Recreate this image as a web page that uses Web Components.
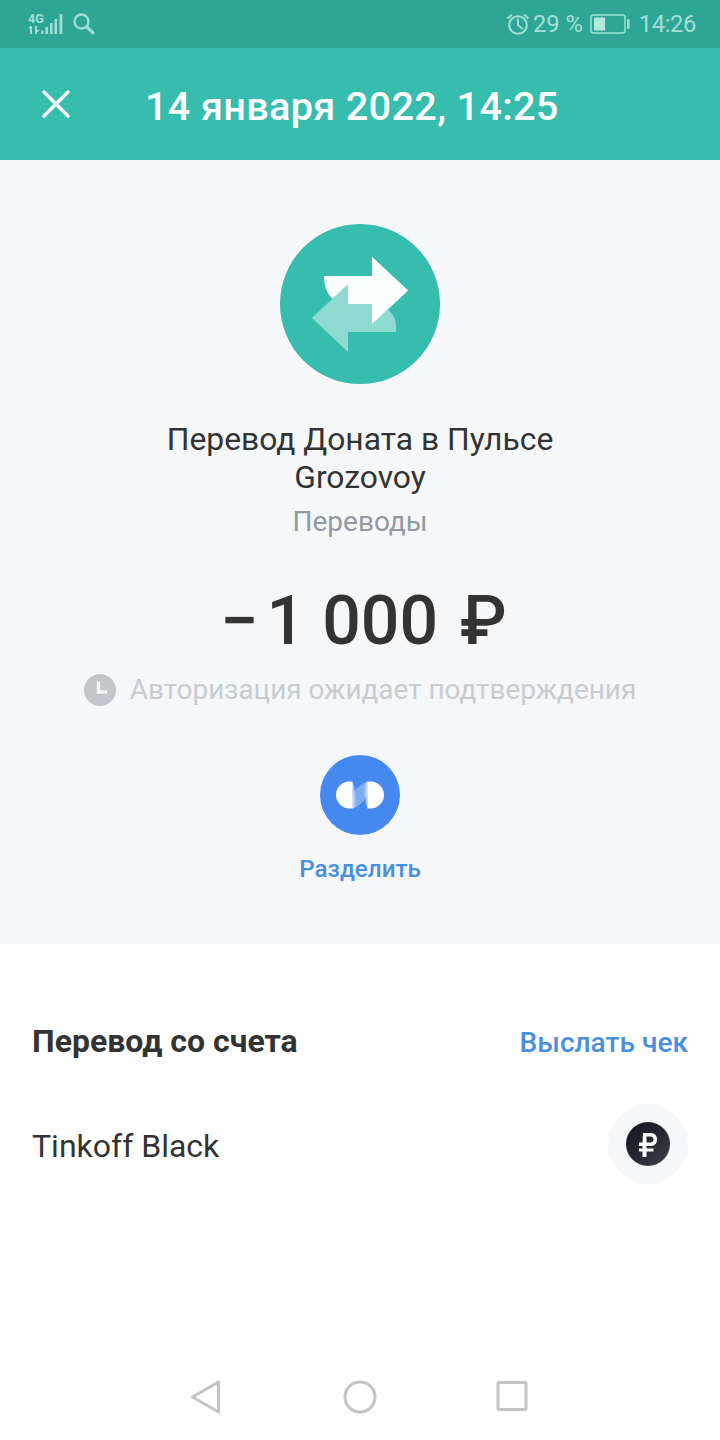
<!DOCTYPE html>
<html><head><meta charset="utf-8">
<style>
html,body{margin:0;padding:0;background:#fff}
body{width:720px;height:1440px;overflow:hidden;font-family:Roboto,"Liberation Sans",sans-serif}
</style></head>
<body>
<status-bar></status-bar>
<app-bar>14 января 2022, 14:25</app-bar>
<op-summary></op-summary>
<account-section></account-section>
<nav-bar></nav-bar>
<script>
function def(name, html){
  customElements.define(name, class extends HTMLElement{
    constructor(){super();this.attachShadow({mode:'open'}).innerHTML=html;}
  });
}
def('status-bar',`<style>
:host{display:flex;height:48px;background:#2fa596;align-items:center;box-sizing:border-box;padding:0 24px 0 28px;color:#9fe0d6;font-size:23.800px;line-height:48px}
.l{display:flex;align-items:center;gap:7px}
.r{margin-left:auto;display:flex;align-items:center}
svg{display:block}
.pct{margin-left:3px;letter-spacing:-.1px}
.time{margin-left:9px;letter-spacing:-.4px}
.bat{margin-left:7px}
</style>
<div class="l">
<svg width="36" height="24" viewBox="0 0 36 24"><g fill="#9fe0d6">
<text x="0" y="10.500" font-family="Roboto" font-size="12.500" font-weight="700">4G</text>
<rect x="2" y="14" width="2" height="8"/><path d="M.2 16.500l2-2.500v2.500z"/><rect x="7" y="14" width="2" height="8"/><path d="M8.500 19l2.800-1.800v1.600l-2.800 1.800z"/>
<rect x="13" y="18.500" width="2.500" height="3.500" rx="1"/><rect x="17.500" y="15" width="2.500" height="7"/><rect x="22" y="11" width="2.500" height="11"/><rect x="26.500" y="7" width="2.500" height="15"/><rect x="31.500" y="2" width="2.800" height="20"/></g></svg>
<svg style="margin-left:1px" width="24" height="24" viewBox="0 0 24 24" fill="none" stroke="#9fe0d6"><circle cx="9.500" cy="9.500" r="7" stroke-width="2.300"/><path d="M14.800 14.800l6.200 6" stroke-width="3.200" stroke-linecap="round"/></svg>
</div>
<div class="r">
<svg width="24" height="24" viewBox="0 0 24 24" fill="none" stroke="#9fe0d6" stroke-width="2"><circle cx="12" cy="13" r="8.800"/><path d="M12 7.500V13l4 3.500" stroke-linecap="round"/><path d="M1.500 6.500L6 2.500M22.500 6.500L18 2.500" stroke-width="2.200"/></svg>
<span class="pct">29 %</span>
<svg class="bat" width="40" height="22" viewBox="0 0 40 22" fill="none"><rect x="1" y="2" width="34" height="18" rx="3" stroke="#9fe0d6" stroke-width="1.500"/><rect x="4" y="4.500" width="11" height="13" rx="1" fill="#b4e8df"/><rect x="37" y="6" width="2.500" height="10" rx="1" fill="#9fe0d6"/></svg>
<span class="time">14:26</span>
</div>`);
def('app-bar',`<style>
:host{display:flex;height:112px;background:#36bdae;align-items:center;box-sizing:border-box;padding:0 0 0 40px;color:#fff;font-size:39.700px;font-weight:500}
svg{display:block;flex:none}
.t{margin-left:73px;margin-top:4px;letter-spacing:.3px}
</style>
<svg width="32" height="32" viewBox="0 0 32 32" fill="none" stroke="#fff" stroke-width="3.400" stroke-linecap="round"><path d="M4 4l24 24M28 4L4 28"/></svg>
<span class="t"><slot></slot></span>`);
def('op-summary',`<style>
:host{display:flex;flex-direction:column;align-items:center;height:784px;box-sizing:border-box;background:#f5f7f9;padding-top:64px;color:#333}
svg{display:block}
.big{width:160px;height:160px;flex:none}
.name{margin-top:36px;font-size:31.800px;line-height:38px;text-align:center;color:#333}
.cat{margin-top:8px;font-size:28px;line-height:36px;color:#9299a2}
.amt{margin:39px 0 0 7px;font-size:68px;line-height:84px;font-weight:500;color:#333;display:flex;align-items:center}
.amt .m{margin-right:8px}
.amt .p{margin-left:5px}
.status{margin-top:9px;display:flex;align-items:center;gap:14px;color:#c9ccd0;font-size:27.900px;line-height:36px}
.split{margin-top:47px;width:80px;height:80px}
.lbl{margin-top:17px;color:#4a8fdd;font-size:24.200px;line-height:34px;font-weight:500}
</style>
<svg class="big" viewBox="0 0 160 160">
<circle cx="80" cy="80" r="80" fill="#36bdae"/>
<path d="M44 52H92V33L128 66.500L92 100V80H68C52 80 44 68 44 52Z" fill="#fbffff"/>
<path d="M116 108H68V128L32 94L68 60V80H92C106 80 116 90 116 102Z" fill="#8edad1"/>
<path d="M92 33L128 66.500L92 100Z" fill="#fbffff"/>
</svg>
<div class="name">Перевод Доната в Пульсе<br>Grozovoy</div>
<div class="cat">Переводы</div>
<div class="amt"><span class="m">−</span><span>1 000</span><span class="p">&nbsp;₽</span></div>
<div class="status">
<svg width="32" height="32" viewBox="0 0 32 32"><circle cx="16" cy="16" r="16" fill="#c3c7cb"/><path d="M14.500 7.500V18H23" fill="none" stroke="#f5f7f9" stroke-width="3.400"/></svg>
<span>Авторизация ожидает подтверждения</span></div>
<svg class="split" viewBox="0 0 80 80">
<defs>
<linearGradient id="a" x1="0" y1="0" x2="1" y2="0"><stop offset="0" stop-color="#fff" stop-opacity=".8"/><stop offset=".55" stop-color="#fff" stop-opacity=".15"/><stop offset="1" stop-color="#fff" stop-opacity=".05"/></linearGradient>
<linearGradient id="b" x1="1" y1="0" x2="0" y2="0"><stop offset="0" stop-color="#fff" stop-opacity=".8"/><stop offset=".55" stop-color="#fff" stop-opacity=".15"/><stop offset="1" stop-color="#fff" stop-opacity=".05"/></linearGradient>
</defs>
<circle cx="40" cy="40" r="40" fill="#4488f0"/>
<path d="M32.500 26.500H29.500A13.500 13.500 0 0 0 29.500 53.500H32.500Z" fill="#fff"/>
<path d="M47.500 26.500H50.500A13.500 13.500 0 0 1 50.500 53.500H47.500Z" fill="#fff"/>
<path d="M47.500 26.500V36C47 44 43 47 40 49.500C37 52 35 53 32.500 53.500V44C33 36 37 33 40 30.500C43 28 45 27 47.500 26.500Z" fill="#fff" fill-opacity=".3"/>
<path d="M32.500 26.500V53.500C35 52 36 50 37.500 47.500C36 41 35 33 32.500 26.500Z" fill="url(#a)"/>
<path d="M47.500 26.500V53.500C45 47 44 39 42.500 32.500C44 30 45 28 47.500 26.500Z" fill="url(#b)"/>
</svg>
<div class="lbl">Разделить</div>`);
def('account-section',`<style>
:host{display:block;box-sizing:border-box;padding:76px 32px 0;background:#fff;color:#333}
.h{display:flex;justify-content:space-between;align-items:center;height:44px}
.t{font-size:32px;font-weight:700;color:#333;margin-top:-2px}
.a{font-size:28.100px;font-weight:500;color:#4a8fdd}
.row{display:flex;justify-content:space-between;align-items:center;margin-top:40px;height:80px;font-size:32px}
.row span{margin-top:4px}
.ic{width:80px;height:80px;border-radius:50%;background:#f5f7f9;display:flex;align-items:center;justify-content:center}
svg{display:block}
</style>
<div class="h"><span class="t">Перевод со счета</span><span class="a">Выслать чек</span></div>
<div class="row"><span>Tinkoff Black</span>
<div class="ic"><svg width="44" height="44" viewBox="0 0 44 44"><defs><linearGradient id="g" x1="0" y1="0" x2="1" y2="1"><stop offset="0" stop-color="#111318"/><stop offset="1" stop-color="#3a3f47"/></linearGradient></defs><circle cx="22" cy="22" r="22" fill="url(#g)"/><path fill-rule="evenodd" d="M17 11H25C29 11 31 14 31 17.500C31 21 29 24 25 24H20.500V26.500H27.500V29.500H20.500V35H16.500V29.500H13V26.500H16.500V24H13V20.500H16.500ZM20.500 14.500V20.500H24.500C26.500 20.500 27.500 19 27.500 17.500C27.500 16 26.500 14.500 24.500 14.500Z" fill="#fff"/></svg></div></div>`);
def('nav-bar',`<style>
:host{display:flex;position:absolute;left:0;top:1372px;width:720px;height:50px}
svg{position:absolute;top:8px;display:block}
</style>
<svg style="left:190px" width="32" height="34" viewBox="0 0 32 34" fill="none" stroke="#c4c4c4" stroke-width="3" stroke-linejoin="round"><path d="M28.500 2v30L2.500 17z"/></svg>
<svg style="left:343px" width="34" height="34" viewBox="0 0 34 34" fill="none" stroke="#c4c4c4" stroke-width="3"><circle cx="17" cy="17" r="15"/></svg>
<svg style="left:496px" width="32" height="32" viewBox="0 0 32 32" fill="none" stroke="#c4c4c4" stroke-width="3" stroke-linejoin="round"><rect x="2" y="2.500" width="28" height="27" rx="1.500"/></svg>`);
</script>
</body></html>
